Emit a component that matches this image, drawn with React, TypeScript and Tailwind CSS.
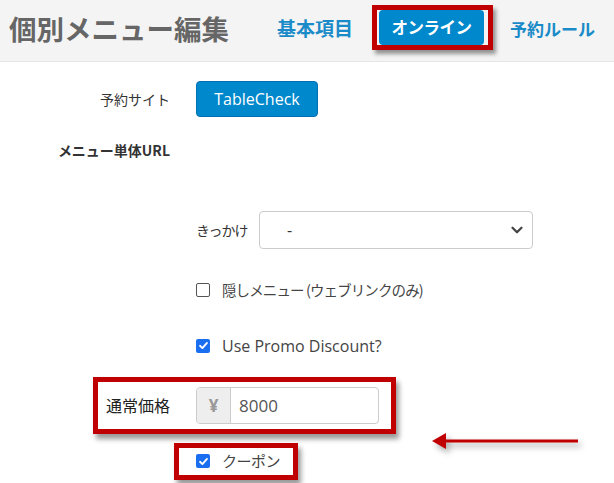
import { ChevronDown } from "lucide-react";

const jp = "font-['Noto_Sans_CJK_JP',sans-serif]";
const latin = "font-['Open_Sans','Noto_Sans_CJK_JP',sans-serif]";

function CheckBox({ checked }: { checked?: boolean }) {
  if (checked) {
    return (
      <span className="flex h-[14px] w-[14px] shrink-0 items-center justify-center rounded-[2px] bg-[#1a6ff0]">
        <svg viewBox="0 0 12 12" className="h-[11px] w-[11px]">
          <path
            d="M2.2 6.3 L4.8 8.8 L9.8 3.2"
            fill="none"
            stroke="white"
            strokeWidth="2"
            strokeLinecap="round"
            strokeLinejoin="round"
          />
        </svg>
      </span>
    );
  }
  return (
    <span className="block h-[14px] w-[14px] shrink-0 rounded-[2px] border border-[#555] bg-white" />
  );
}

function Header() {
  return (
    <div className="flex h-[62px] items-center whitespace-nowrap border-b border-[#e6e6e6] bg-[#f4f4f4] pl-[9px]">
      <h1 className={`${jp} mb-[4px] shrink-0 text-[27.5px] font-bold text-[#666]`}>
        個別メニュー編集
      </h1>
      <a className={`${jp} ml-[48px] mb-[4px] shrink-0 text-[19px] font-bold text-[#1a8bc8]`}>
        基本項目
      </a>
      <div className="mb-[6px] ml-[19px] h-[45px] w-[121px] shrink-0 border-[5px] border-[#c00000] shadow-[3px_4px_4px_rgba(0,0,0,0.4)]">
        <div className="ml-[2px] flex h-full w-[105px] items-center justify-center rounded-[4px] bg-[#0088cc]">
          <span className={`${jp} text-[16.5px] font-bold tracking-[-0.5px] text-white`}>オンライン</span>
        </div>
      </div>
      <a className={`${jp} ml-[17px] mb-[4px] shrink-0 text-[17px] font-bold text-[#1a8bc8]`}>
        予約ルール
      </a>
    </div>
  );
}

export default function App() {
  return (
    <div className="relative h-[483px] w-[614px] overflow-hidden whitespace-nowrap bg-white text-[#333]">
      <Header />

      <div className="flex flex-col">
        <div className="mt-[19px] flex items-center">
          <div className={`${jp} w-[170px] text-right text-[14px] text-[#333]`}>予約サイト</div>
          <button
            className={`${latin} ml-[26px] h-[36px] w-[122px] rounded-[4px] border border-[#0070b3] bg-[#0088cc] text-[16px] text-white`}
          >
            TableCheck
          </button>
        </div>

        <div className="mt-[23px] flex items-center">
          <div className={`${jp} w-[170px] text-right text-[14px] font-bold text-[#333]`}>
            メニュー単体URL
          </div>
        </div>

        <div className="mt-[50px] ml-[196px] flex items-center">
          <span className={`${jp} w-[63px] text-[14px] tracking-[-1px] text-[#333]`}>きっかけ</span>
          <div className="flex h-[38px] w-[274px] items-center justify-between rounded-[4px] border border-[#ccc] bg-white pl-[27px] pr-[6px]">
            <span className={`${latin} text-[16px] text-[#333]`}>-</span>
            <ChevronDown className="h-[18px] w-[18px] text-[#444]" strokeWidth={3} />
          </div>
        </div>

        <label className="mt-[30px] ml-[196px] flex items-center gap-[12px]">
          <CheckBox />
          <span className={`${jp} text-[14.5px] tracking-[-0.9px] text-[#444]`}>隠しメニュー (ウェブリンクのみ)</span>
        </label>

        <label className="mt-[33px] ml-[196px] flex items-center gap-[12px]">
          <CheckBox checked />
          <span className={`${latin} text-[16px] text-[#444]`}>Use Promo Discount?</span>
        </label>

        <div className="mt-[19px] ml-[93px] flex h-[57px] w-[303px] items-center border-[5px] border-[#c00000] shadow-[3px_5px_5px_rgba(0,0,0,0.4)]">
          <div className={`${jp} w-[72px] text-right text-[16px] text-[#222]`}>通常価格</div>
          <div className="ml-[26px] flex h-[37px] w-[183px] overflow-hidden rounded-[4px] border border-[#ccc]">
            <span className={`${latin} flex w-[34px] items-center justify-center border-r border-[#ccc] bg-[#eee] text-[17px] font-bold text-[#999]`}>
              ¥
            </span>
            <span className={`${latin} flex items-center pl-[8px] text-[17px] text-[#555]`}>8000</span>
          </div>
        </div>

        <div className="mt-[9px] ml-[174px] flex h-[37px] w-[124px] items-center border-[5px] border-[#c00000] pl-[17px] shadow-[3px_5px_5px_rgba(0,0,0,0.4)]">
          <CheckBox checked />
          <span className={`${jp} ml-[12px] text-[15px] tracking-[-0.5px] text-[#444]`}>クーポン</span>
        </div>
      </div>

      <svg
        className="absolute left-[430px] top-[430px] h-[24px] w-[152px]"
        viewBox="0 0 152 24"
        style={{ filter: "drop-shadow(3px 4px 3px rgba(0,0,0,0.35))" }}
      >
        <line x1="12" y1="11" x2="148" y2="11" stroke="#c00000" strokeWidth="3" />
        <polygon points="2,11 16,3 16,19" fill="#c00000" />
      </svg>
    </div>
  );
}
